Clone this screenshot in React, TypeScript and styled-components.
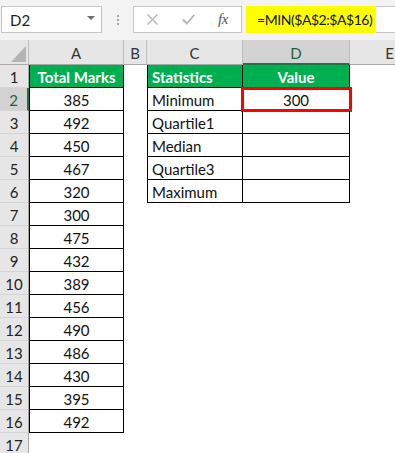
import React from "react";
import styled, { createGlobalStyle, css } from "styled-components";

const GlobalStyle = createGlobalStyle`
  html, body { margin: 0; padding: 0; background: #ffffff; }
  body { font-family: Lato, "Noto Sans", "Liberation Sans", sans-serif; overflow: hidden; }
  * { box-sizing: border-box; }
`;

const Page = styled.div`
  width: 395px;
  height: 453px;
  overflow: hidden;
  display: flex;
  flex-direction: column;
  background: #ffffff;
`;

const TopBar = styled.div`
  height: 40px;
  background: #f3f3f3;
  display: flex;
  align-items: flex-start;
  padding-top: 6px;
  flex-shrink: 0;
`;

const NameBox = styled.div`
  margin-left: 1px;
  width: 101px;
  height: 27px;
  background: #ffffff;
  border: 1px solid #c6c6c6;
  display: flex;
  align-items: center;
  justify-content: space-between;
  padding: 0 6px 0 8px;
  font-size: 15px;
  color: #222;
`;

const DropArrow = styled.span`
  width: 0;
  height: 0;
  border-left: 4px solid transparent;
  border-right: 4px solid transparent;
  border-top: 4px solid #6d6d6d;
  margin-top: -3px;
`;

const Grip = styled.div`
  width: 31px;
  height: 27px;
  display: flex;
  flex-direction: column;
  align-items: center;
  justify-content: center;
  gap: 2px;
`;

const GripDot = styled.span`
  width: 2px;
  height: 2px;
  background: #a6a6a6;
`;

const FxBox = styled.div`
  width: 109px;
  height: 27px;
  background: #ffffff;
  border: 1px solid #c6c6c6;
  display: flex;
  align-items: center;
  padding-left: 13px;
  gap: 24px;
`;

const FxLabel = styled.span`
  font-family: "Liberation Serif", "DejaVu Serif", serif;
  font-style: italic;
  font-size: 15px;
  color: #555;
  letter-spacing: -0.5px;
  margin-left: -1px;
`;

const FormulaInput = styled.div`
  margin-left: 4px;
  flex: 1;
  height: 27px;
  background: #ffffff;
  border: 1px solid #c6c6c6;
  border-right: none;
  display: flex;
`;

const Highlight = styled.div`
  background: #ffff00;
  width: 130px;
  margin: -1px 0 -1px -1px;
  display: flex;
  align-items: center;
  padding-left: 11px;
  font-size: 14px;
  letter-spacing: -0.45px;
  color: #111;
  white-space: nowrap;
`;

const Sheet = styled.div`
  display: grid;
  grid-template-columns: 29px 95px 23px 96px 107px 80px;
  grid-template-rows: 25px;
  grid-auto-rows: 23px;
  font-size: 15px;
  color: #111;
`;

const Corner = styled.div`
  background: #e6e6e6;
  border-right: 1px solid #bdbdbd;
  border-bottom: 1px solid #a8a8a8;
  display: flex;
  align-items: flex-end;
  justify-content: flex-end;
  padding: 0 2px 2px 0;
`;

const ColHeader = styled.div<{ $selected?: boolean }>`
  background: ${(p) => (p.$selected ? "#d2d2d2" : "#e6e6e6")};
  border-right: 1px solid #bdbdbd;
  border-bottom: ${(p) => (p.$selected ? "2px solid #217346" : "1px solid #a8a8a8")};
  color: ${(p) => (p.$selected ? "#1f5f3a" : "#333")};
  display: flex;
  align-items: center;
  justify-content: center;
  padding-top: ${(p) => (p.$selected ? "2px" : "1px")};
`;

const RowHeader = styled.div<{ $selected?: boolean }>`
  background: ${(p) => (p.$selected ? "#d2d2d2" : "#e6e6e6")};
  border-bottom: 1px solid #d4d4d4;
  border-right: ${(p) => (p.$selected ? "2px solid #217346" : "1px solid #a8a8a8")};
  color: ${(p) => (p.$selected ? "#1f5f3a" : "#222")};
  display: flex;
  align-items: center;
  justify-content: center;
  padding-top: 1px;
`;

const Cell = styled.div<{
  $left?: boolean;
  $right?: boolean;
  $top?: boolean;
  $bottom?: boolean;
  $head?: boolean;
  $align?: "left" | "center";
}>`
  position: relative;
  display: flex;
  align-items: center;
  padding-top: 1px;
  justify-content: ${(p) => (p.$align === "left" ? "flex-start" : "center")};
  padding-left: ${(p) => (p.$align === "left" ? "4px" : "0")};
  white-space: nowrap;
  ${(p) => p.$left && css`border-left: 1px solid #000;`}
  ${(p) => p.$right && css`border-right: 1px solid #000;`}
  ${(p) => p.$top && css`border-top: 1px solid #000;`}
  ${(p) => p.$bottom && css`border-bottom: 1px solid #000;`}
  ${(p) =>
    p.$head &&
    css`
      background: #00b050;
      color: #ffffff;
      font-weight: 700;
    `}
`;

const Selection = styled.div`
  position: absolute;
  top: -1px;
  left: -2px;
  right: -3px;
  bottom: -2px;
  border: 3px solid #ff0000;
  pointer-events: none;
`;

const FillHandle = styled.span`
  position: absolute;
  right: -3px;
  bottom: -3px;
  width: 3px;
  height: 3px;
  background: #217346;
`;

const marks = [385, 492, 450, 467, 320, 300, 475, 432, 389, 456, 490, 486, 430, 395, 492];
const stats = ["Minimum", "Quartile1", "Median", "Quartile3", "Maximum"];

export default function App() {
  const rows = Array.from({ length: 17 }, (_, i) => i + 1);
  return (
    <Page>
      <GlobalStyle />
      <TopBar>
        <NameBox>
          <span>D2</span>
          <DropArrow />
        </NameBox>
        <Grip>
          <GripDot />
          <GripDot />
          <GripDot />
        </Grip>
        <FxBox>
          <svg width="11" height="11" viewBox="0 0 11 11">
            <path d="M0.5 0.5 L10.5 10.5 M10.5 0.5 L0.5 10.5" stroke="#b4b4b4" strokeWidth="1.4" fill="none" />
          </svg>
          <svg width="13" height="11" viewBox="0 0 13 11">
            <path d="M0.8 5.5 L4.8 9.5 L12.2 1" stroke="#b4b4b4" strokeWidth="1.8" fill="none" />
          </svg>
          <FxLabel>fx</FxLabel>
        </FxBox>
        <FormulaInput>
          <Highlight>=MIN($A$2:$A$16)</Highlight>
        </FormulaInput>
      </TopBar>
      <Sheet>
        <Corner>
          <svg width="15" height="16" viewBox="0 0 15 16">
            <path d="M15 0 L15 16 L0 16 Z" fill="#b4b4b4" />
          </svg>
        </Corner>
        <ColHeader>A</ColHeader>
        <ColHeader>B</ColHeader>
        <ColHeader>C</ColHeader>
        <ColHeader $selected>D</ColHeader>
        <ColHeader>E</ColHeader>
        {rows.map((r) => {
          const inA = r <= 16;
          const inStats = r <= 6;
          const aText = r === 1 ? "Total Marks" : inA ? String(marks[r - 2]) : "";
          const cText = r === 1 ? "Statistics" : inStats ? stats[r - 2] : "";
          const dText = r === 1 ? "Value" : r === 2 ? "300" : "";
          return (
            <React.Fragment key={r}>
              <RowHeader $selected={r === 2}>{r}</RowHeader>
              <Cell $left={inA} $right={inA} $bottom={inA} $head={r === 1}>
                {aText}
              </Cell>
              <Cell />
              <Cell $left={inStats} $right={inStats} $bottom={inStats} $head={r === 1} $align="left">
                {cText}
              </Cell>
              <Cell $right={inStats} $bottom={inStats} $head={r === 1}>
                {dText}
                {r === 2 && (
                  <Selection>
                    <FillHandle />
                  </Selection>
                )}
              </Cell>
              <Cell />
            </React.Fragment>
          );
        })}
      </Sheet>
    </Page>
  );
}
